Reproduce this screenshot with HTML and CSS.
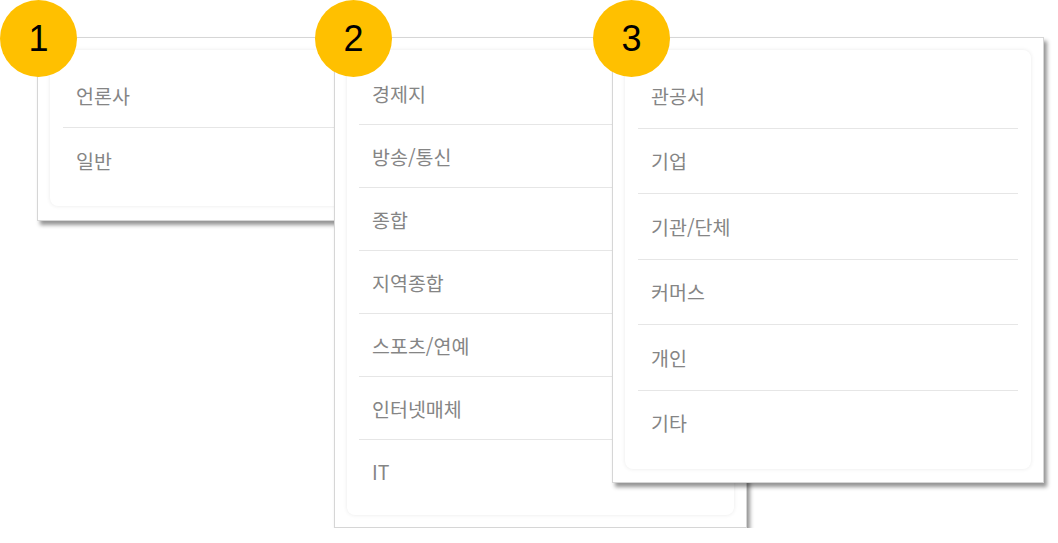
FILE: index.html
```html
<!DOCTYPE html>
<html lang="ko">
<head>
<meta charset="utf-8">
<title>분류</title>
<link rel="stylesheet" href="styles.css">
</head>
<body>
<div class="stage">
  <section class="panel panel-1">
    <span class="badge badge-first">1</span>
    <div class="card">
      <ul class="list">
        <li class="item">언론사</li>
        <li class="item">일반</li>
      </ul>
    </div>
  </section>
  <section class="panel panel-2">
    <span class="badge">2</span>
    <div class="card">
      <ul class="list">
        <li class="item">경제지</li>
        <li class="item">방송/통신</li>
        <li class="item">종합</li>
        <li class="item">지역종합</li>
        <li class="item">스포츠/연예</li>
        <li class="item">인터넷매체</li>
        <li class="item">IT</li>
      </ul>
    </div>
  </section>
  <section class="panel panel-3">
    <span class="badge">3</span>
    <div class="card">
      <ul class="list">
        <li class="item">관공서</li>
        <li class="item">기업</li>
        <li class="item">기관/단체</li>
        <li class="item">커머스</li>
        <li class="item">개인</li>
        <li class="item">기타</li>
      </ul>
    </div>
  </section>
</div>
</body>
</html>
```

FILE: styles.css
```css
html, body {
  margin: 0;
  padding: 0;
  background: #ffffff;
}

body {
  font-family: "Noto Sans CJK KR", "Noto Sans", sans-serif;
}

.stage {
  display: flex;
  align-items: flex-start;
  padding: 37px 0 0 37px;
}

.panel {
  position: relative;
  box-sizing: border-box;
  background: #ffffff;
  border: 1px solid #d6d6d6;
  padding: 12px;
  box-shadow: 3px 4px 4px rgba(0, 0, 0, 0.42);
  flex: none;
}

.panel-1 {
  width: 340px;
  margin-right: -43px;
  padding-bottom: 14px;
  z-index: 1;
}

.panel-2 {
  width: 413px;
  margin-right: -135px;
  z-index: 2;
}

.panel-3 {
  width: 432px;
  padding-bottom: 13px;
  z-index: 3;
}

.badge {
  position: absolute;
  top: -38px;
  left: -20px;
  width: 77px;
  height: 77px;
  border-radius: 50%;
  background: #ffc000;
  color: #000000;
  font-family: "Liberation Sans", Arial, sans-serif;
  font-size: 36px;
  line-height: 77px;
  text-align: center;
  z-index: 5;
}

.badge-first {
  left: -38px;
}

.card {
  background: #ffffff;
  border-radius: 8px;
  box-shadow: 0 0 4px rgba(0, 0, 0, 0.09);
  padding: 13px 13px 14px;
}

.panel-2 .card {
  padding: 12px 12px 13px;
}

.list {
  list-style: none;
  margin: 0;
  padding: 0;
}

.item {
  display: flex;
  align-items: center;
  height: 64px;
  padding-left: 13px;
  font-size: 19.5px;
  color: #858585;
  border-bottom: 1px solid #e6e6e6;
}

.item:last-child {
  border-bottom: none;
}

.panel-2 .item {
  height: 62px;
}

.panel-3 .item {
  height: 64.5px;
}
```
